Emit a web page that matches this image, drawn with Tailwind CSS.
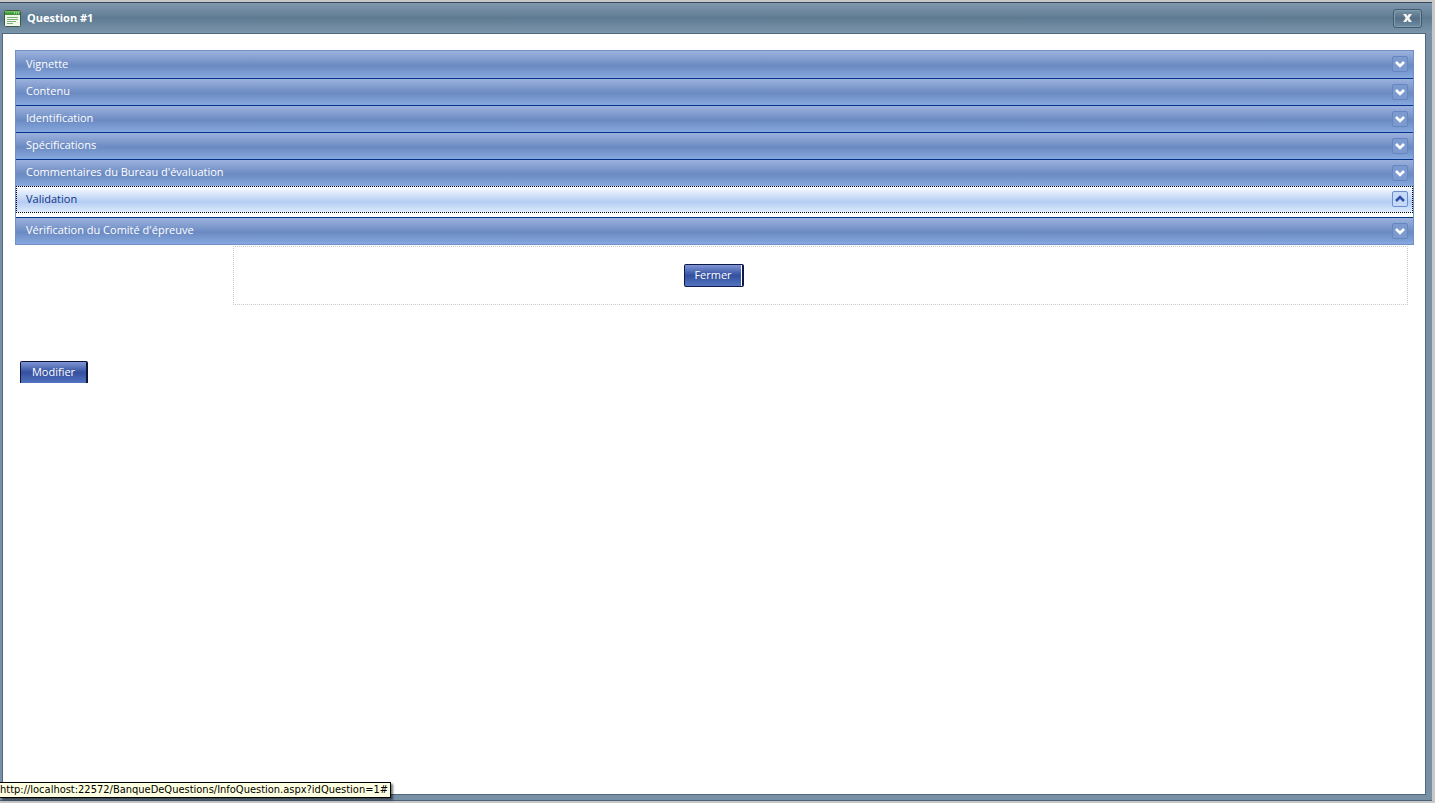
<!DOCTYPE html>
<html lang="fr">
<head>
<meta charset="utf-8">
<title>Question #1</title>
<script src="https://cdn.jsdelivr.net/npm/@tailwindcss/browser@4"></script>
</head>
<body class="h-screen overflow-hidden bg-[#c8c8c8] pt-[2px] pr-[3px] pb-[2px] font-['Open_Sans',sans-serif] text-[11px]">
<svg class="hidden">
  <symbol id="down" viewBox="0 0 14 14"><path d="M3 5 7 9l4-4" fill="none" stroke="#fff" stroke-width="2.600"/></symbol>
  <symbol id="up" viewBox="0 0 14 14"><path d="M3 9 7 5l4 4" fill="none" stroke="#2d50a8" stroke-width="2.600"/></symbol>
</svg>
<div class="flex h-full flex-col border-t border-b border-t-[#35475a] border-b-[#4d6277] bg-[#7890a5]">
  <header class="flex h-[30px] shrink-0 items-center gap-[6px] bg-linear-to-b from-[#8198ae] via-[#5e7b93] via-50% to-[#7b95aa] pr-[10px] pl-1">
    <svg class="h-[17px] w-[17px]" viewBox="0 0 17 17">
      <rect x=".5" y=".5" width="16" height="16" rx="1" fill="#f2f7ee" stroke="#3c5b3f"/>
      <path d="M1 1h15v4H1z" fill="#3f963c"/><path d="M1 1h15v1.500H1z" fill="#74bd62"/>
      <path d="M10 3h1m1 0h1m1 0h1" stroke="#e5ffd8"/>
      <path d="M3 7.500h11M3 9.500h11M3 11.500h9M3 13.500h6" stroke="#7fae76"/>
    </svg>
    <h1 class="grow font-bold text-white">Question #1</h1>
    <button aria-label="Fermer la fenêtre" class="flex h-[19px] w-[29px] items-center justify-center rounded-[3px] border border-[#405b70] bg-linear-to-b from-[#7892a7] via-[#557086] via-50% to-[#6d8ca2] shadow-[inset_0_0_0_1px_#829caf]">
      <svg class="h-2 w-[9px]" viewBox="0 0 10 9"><path d="M0 0h3.500L5 2.300 6.500 0H10L7 4.500 10 9H6.500L5 6.700 3.500 9H0l3-4.500z" fill="#f3f3f0"/></svg>
    </button>
  </header>
  <main class="mr-[6px] mb-[5px] ml-[2px] grow border border-[#50677c] bg-white pt-[16px] pr-[11px] pl-[12px]">
    <div class="border border-[#6f91c6]">
      <button class="flex h-[27px] w-full items-center justify-between bg-linear-to-b from-[#9cb2dd] via-[#6b8ac2] via-55% to-[#87a9df] pr-[5px] pb-px pl-[10px] text-white"><span>Vignette</span><svg class="h-4 w-4 rounded-[2px] border border-[#6586c2] bg-[#7c9acd]"><use href="#down"/></svg></button>
      <button class="flex h-[27px] w-full items-center justify-between border-t border-[#06328a] bg-linear-to-b from-[#9cb2dd] via-[#6b8ac2] via-55% to-[#87a9df] pr-[5px] pb-px pl-[10px] text-white"><span>Contenu</span><svg class="h-4 w-4 rounded-[2px] border border-[#6586c2] bg-[#7c9acd]"><use href="#down"/></svg></button>
      <button class="flex h-[27px] w-full items-center justify-between border-t border-[#06328a] bg-linear-to-b from-[#9cb2dd] via-[#6b8ac2] via-55% to-[#87a9df] pr-[5px] pb-px pl-[10px] text-white"><span>Identification</span><svg class="h-4 w-4 rounded-[2px] border border-[#6586c2] bg-[#7c9acd]"><use href="#down"/></svg></button>
      <button class="flex h-[27px] w-full items-center justify-between border-t border-[#06328a] bg-linear-to-b from-[#9cb2dd] via-[#6b8ac2] via-55% to-[#87a9df] pr-[5px] pb-px pl-[10px] text-white"><span>Spécifications</span><svg class="h-4 w-4 rounded-[2px] border border-[#6586c2] bg-[#7c9acd]"><use href="#down"/></svg></button>
      <button class="flex h-[27px] w-full items-center justify-between border-t border-[#06328a] bg-linear-to-b from-[#9cb2dd] via-[#6b8ac2] via-55% to-[#87a9df] pr-[5px] pb-px pl-[10px] text-white"><span>Commentaires du Bureau d'évaluation</span><svg class="h-4 w-4 rounded-[2px] border border-[#6586c2] bg-[#7c9acd]"><use href="#down"/></svg></button>
      <button aria-expanded="true" class="mb-1 flex h-[27px] w-full items-center justify-between border border-dotted border-black bg-linear-to-b from-[#f8fbff] via-[#b4cdf3] via-60% to-[#ddeafd] pr-1 pb-px pl-[9px] text-[#153487]"><span>Validation</span><svg class="h-4 w-4 rounded-[2px] border border-[#6b8dcc] bg-[#c6d9f7]"><use href="#up"/></svg></button>
      <button class="flex h-[27px] w-full items-center justify-between border-t border-[#06328a] bg-linear-to-b from-[#9cb2dd] via-[#6b8ac2] via-55% to-[#87a9df] pr-[5px] pb-px pl-[10px] text-white"><span>Vérification du Comité d'épreuve</span><svg class="h-4 w-4 rounded-[2px] border border-[#6586c2] bg-[#7c9acd]"><use href="#down"/></svg></button>
    </div>
    <div class="mt-px mr-[6px] ml-[218px] flex h-[59px] border border-dotted border-[#c8c8c8] pt-[17px] pl-[450px]">
      <button class="flex h-[23px] w-[60px] items-center rounded-[2px] border border-r-2 border-[#101a48] bg-linear-to-b from-[#8095d5] via-[#34509e] via-50% to-[#5273c0] text-white"><span class="flex h-full grow items-center justify-center border-r border-white">Fermer</span></button>
    </div>
    <button class="mt-[56px] ml-[5px] flex h-[22px] w-[68px] items-center justify-center rounded-t-[2px] border border-r-2 border-b-0 border-[#0c1438] bg-linear-to-b from-[#8095d5] via-[#34509e] via-50% to-[#5273c0] text-white">Modifier</button>
  </main>
</div>
<div role="tooltip" class="absolute bottom-[5px] left-0 flex h-[16px] items-center border border-l-0 border-black bg-[#ffffe1] pr-[2px] font-['DejaVu_Sans_Condensed','DejaVu_Sans',sans-serif] text-[11px] whitespace-nowrap text-black shadow-[2px_2px_2px_#0008]">http://localhost:22572/BanqueDeQuestions/InfoQuestion.aspx?idQuestion=1#</div>
</body>
</html>
